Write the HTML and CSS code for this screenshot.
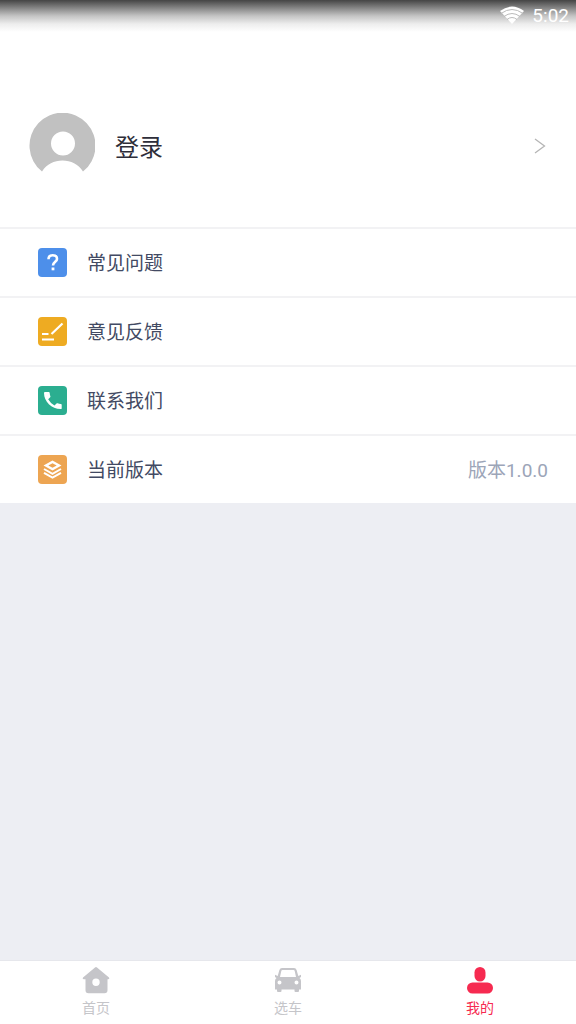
FILE: index.html
```html
<!DOCTYPE html>
<html lang="zh-CN">
<head>
<meta charset="utf-8">
<meta name="viewport" content="width=device-width, initial-scale=1">
<title>我的</title>
<link rel="stylesheet" href="styles.css">
</head>
<body>
<div class="app">
  <header class="status">
    <svg class="wifi" viewBox="0 0 24 18" aria-hidden="true">
      <path class="wifi-fan" d="M0 5Q12-4 24 5L12 18Z"/>
      <path class="wifi-gap" d="M1 7.500Q12-.5 23 7.500M4 10.500Q12 4.500 20 10.500M7 13.500Q12 9.500 17 13.500"/>
    </svg>
    <time>5:02</time>
  </header>
  <main class="content">
    <a class="profile" href="#login">
      <svg class="avatar" viewBox="0 0 66 66" aria-hidden="true">
        <path fill="#c1c1c1" fill-rule="evenodd" d="M13 58.500A33 33 0 1 1 54 58.500C49 51 42 47.500 33.500 47.500S18 51 13 58.500ZM34 18.500a12 12 0 1 0 0 24a12 12 0 1 0 0-24Z"/>
      </svg>
      <span class="name">登录</span>
      <svg class="chevron" viewBox="0 0 12 16" aria-hidden="true"><path d="M1 1l9.500 7L1 15"/></svg>
    </a>
    <nav class="menu" aria-label="菜单">
      <a class="row" href="#faq">
        <svg class="icon blue" viewBox="0 0 29 29" aria-hidden="true">
          <path class="stroke" stroke-width="2.600" d="M10.500 11.300C10.500 8.600 12.200 7.300 14.700 7.300S19 8.700 19 11C19 13.800 15 14 15 17.600"/>
          <rect x="13.600" y="19.500" width="2.800" height="2.800" fill="#fff"/>
        </svg>
        <span class="label">常见问题</span>
      </a>
      <a class="row" href="#feedback">
        <svg class="icon yellow" viewBox="0 0 29 29" aria-hidden="true">
          <path class="stroke" stroke-width="2.200" d="M4 17h6.500M4 22.500h12M13.500 17L24.500 6.500"/>
        </svg>
        <span class="label">意见反馈</span>
      </a>
      <a class="row" href="#contact">
        <svg class="icon green" viewBox="0 0 29 29" aria-hidden="true">
          <path fill="#fff" d="M7 6h3.800q.8 0 .9.900q.1 1.800.7 3.300q.2.600-.2 1.100l-2 2q2.200 4 6.300 6.200l2-2q.5-.4 1.100-.2q1.500.5 3.200.6q.9.100.9.900v3.400q0 .9-.9.900C13.500 23 6 15.500 6 7q0-1 1-1Z"/>
        </svg>
        <span class="label">联系我们</span>
      </a>
      <div class="row">
        <svg class="icon orange" viewBox="0 0 29 29" aria-hidden="true">
          <path fill="#fff" fill-rule="evenodd" d="M14.500 5.500L23.500 10.500L14.500 15.500L5.500 10.500ZM14.500 8.200L10.300 10.500L14.500 12.800L18.700 10.500Z"/>
          <path class="stroke" stroke-width="2" d="M6 14l8.500 4.800L23 14M6 17.800l8.500 4.800l8.500-4.800"/>
        </svg>
        <span class="label">当前版本</span>
        <span class="version">版本1.0.0</span>
      </div>
    </nav>
  </main>
  <nav class="tabs" aria-label="主导航">
    <a class="tab" href="#home">
      <svg class="tab-icon" viewBox="0 0 28 28" aria-hidden="true">
        <path fill="currentColor" fill-rule="evenodd" d="M13 1.500q1-1 2 0L27 11.500q1 1.800-.8 1.800H25.500v11q0 3-3 3H6.500q-3 0-3-3V13.300H1.800Q0 13.300 1 11.500ZM14 12.500a3.700 3.700 0 1 0 0 7.400a3.700 3.700 0 1 0 0-7.400Z"/>
      </svg>
      <span>首页</span>
    </a>
    <a class="tab" href="#cars">
      <svg class="tab-icon" viewBox="0 0 28 28" aria-hidden="true">
        <path fill="currentColor" fill-rule="evenodd" d="M8 2H20Q22 2 22.600 4L24.300 10L27 8.800V11L25.500 12Q27 13 27 15V23.500H25V25Q25 26 24 26H21.500Q20.500 26 20.500 25V23.500H7.500V25Q7.500 26 6.500 26H4Q3 26 3 25V23.500H1V15Q1 13 2.500 12L1 11V8.800L3.700 10L5.400 4Q6 2 8 2ZM8.500 4Q7.500 4 7.300 5L6 11H22L20.700 5Q20.500 4 19.500 4ZM5.500 14.500a2 2 0 1 0 0 4a2 2 0 1 0 0-4ZM22.500 14.500a2 2 0 1 0 0 4a2 2 0 1 0 0-4Z"/>
      </svg>
      <span>选车</span>
    </a>
    <a class="tab active" href="#me" aria-current="page">
      <svg class="tab-icon" viewBox="0 0 28 28" aria-hidden="true">
        <rect x="8.500" y="1" width="11" height="14.500" rx="5.500" fill="currentColor"/>
        <rect x="1" y="16.500" width="26" height="11" rx="5.500" fill="currentColor"/>
      </svg>
      <span>我的</span>
    </a>
  </nav>
</div>
</body>
</html>
```
FILE: styles.css
```css
* {
  box-sizing: border-box;
}

body {
  margin: 0;
  background: #edeef3;
  font-family: Roboto, "Noto Sans CJK SC", sans-serif;
}

a {
  color: inherit;
  text-decoration: none;
}

svg {
  display: block;
  flex: none;
}

.app {
  display: flex;
  flex-direction: column;
  min-height: 100vh;
}

.status {
  display: flex;
  align-items: center;
  justify-content: flex-end;
  gap: 8px;
  height: 32px;
  padding: 0 7px 2px 0;
  background: linear-gradient(#444, #858585 25%, #c4c4c4 50%, #ededed 75%, #fff);
  color: #fff;
  font-size: 19px;
}

.wifi {
  width: 24px;
  height: 18px;
}

.wifi-fan {
  fill: #fff;
}

.wifi-gap {
  fill: none;
  stroke: #bbb;
  stroke-width: 1;
}

.content {
  flex: 1;
}

.profile {
  display: flex;
  align-items: center;
  gap: 20px;
  padding: 81px 30px 48px 29px;
  background: #fff;
  color: #2e2e3a;
}

.avatar {
  width: 66px;
  height: 66px;
}

.name {
  flex: 1;
  padding-top: 4px;
  font-size: 24px;
  line-height: 32px;
}

.chevron {
  width: 12px;
  height: 16px;
  fill: none;
  stroke: #b5b5b5;
  stroke-width: 1.300;
}

.row {
  display: flex;
  align-items: center;
  gap: 20px;
  min-height: 69px;
  padding: 0 28px 0 38px;
  border-top: 2px solid #f2f2f4;
  background: #fff;
  color: #424a63;
  font-size: 19px;
  line-height: 28px;
}

.icon {
  width: 29px;
  height: 29px;
  border-radius: 4px;
}

.stroke {
  fill: none;
  stroke: #fff;
}

.blue {
  background: #4d8fea;
}

.yellow {
  background: #eeab22;
}

.green {
  background: #2bae90;
}

.orange {
  background: #eda552;
}

.label {
  flex: 1;
  padding-top: 3px;
}

.version {
  padding-top: 2px;
  color: #9ca5b8;
}

.tabs {
  display: flex;
  min-height: 64px;
  border-top: 1px solid #e6e7ec;
  background: #fff;
}

.tab {
  display: flex;
  flex: 1;
  flex-direction: column;
  align-items: center;
  gap: 4px;
  padding-top: 5px;
  color: #c5c5c9;
  font-size: 14px;
  line-height: 20px;
}

.tab-icon {
  width: 28px;
  height: 28px;
}

.active {
  color: #f62a50;
}
```
